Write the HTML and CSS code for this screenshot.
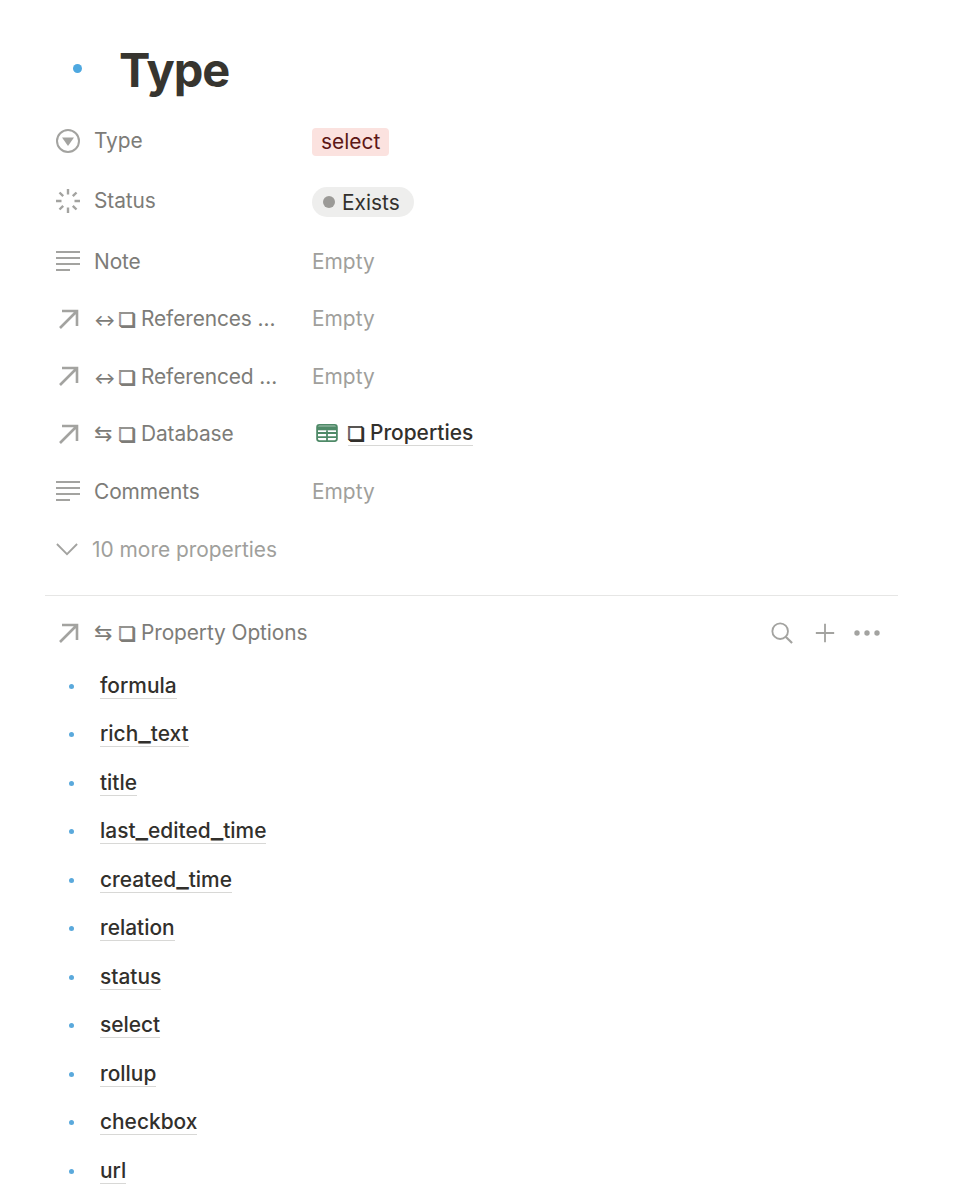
FILE: index.html
```html
<!DOCTYPE html>
<html lang="en">
<head>
    <meta charset="UTF-8">
    <meta name="viewport" content="width=device-width, initial-scale=1.0">
    <title>Type</title>
    <link rel="stylesheet" href="styles.css">
</head>
<body>

<svg class="defs" width="0" height="0">
    <symbol id="i-arrow" viewBox="0 0 24 24">
        <path d="M4 21 L21 4 M6 4 H21 V19" fill="none" stroke="currentColor" stroke-width="2.6"/>
    </symbol>
    <symbol id="i-lines" viewBox="0 0 24 24">
        <path d="M0 2 H24 M0 8 H24 M0 14 H24 M0 20 H14" fill="none" stroke="currentColor" stroke-width="2"/>
    </symbol>
    <symbol id="i-table" viewBox="0 0 24 20">
        <rect x="1" y="1" width="22" height="18" rx="2.5" fill="#fff" stroke="#4f8a68" stroke-width="2"/>
        <path d="M1 2.5 H23 V7 H1 Z" fill="#4f8a68"/>
        <path d="M1 10 H23 M1 14.5 H23 M12 7 V19" fill="none" stroke="#4f8a68" stroke-width="2"/>
    </symbol>
</svg>

<div class="page">
    <div class="header">
        <span class="page-dot"></span>
        <h1>Type</h1>
    </div>

    <div class="props">
        <div class="prop">
            <svg class="icon" viewBox="0 0 24 24">
                <circle cx="12" cy="12" r="11" fill="none" stroke="currentColor" stroke-width="2"/>
                <path d="M6 8.5 H18 L12 17 Z" fill="currentColor"/>
            </svg>
            <span class="prop-name raised">Type</span>
            <span class="tag">select</span>
        </div>
        <div class="prop">
            <svg class="icon spinner" viewBox="0 0 26 26">
                <path d="M13 1 V6.5 M13 19.5 V25 M1 13 H6.5 M19.5 13 H25 M4.5 4.5 L8.2 8.2 M17.8 17.8 L21.5 21.5 M21.5 4.5 L17.8 8.2 M8.2 17.8 L4.5 21.5" fill="none" stroke="currentColor" stroke-width="2.4"/>
            </svg>
            <span class="prop-name raised">Status</span>
            <span class="status"><span class="status-dot"></span>Exists</span>
        </div>
        <div class="prop note">
            <svg class="icon"><use href="#i-lines"/></svg>
            <span class="prop-name">Note</span>
            <span class="empty">Empty</span>
        </div>
        <div class="prop short">
            <svg class="icon"><use href="#i-arrow"/></svg>
            <span class="prop-name"><span class="rel">↔</span><span class="box">❏</span>References ...</span>
            <span class="empty">Empty</span>
        </div>
        <div class="prop short">
            <svg class="icon"><use href="#i-arrow"/></svg>
            <span class="prop-name"><span class="rel">↔</span><span class="box">❏</span>Referenced ...</span>
            <span class="empty">Empty</span>
        </div>
        <div class="prop short">
            <svg class="icon"><use href="#i-arrow"/></svg>
            <span class="prop-name"><span class="rel swap">⇆</span><span class="box">❏</span>Database</span>
            <span class="db-link">
                <svg class="table-icon"><use href="#i-table"/></svg>
                <span class="link"><span class="box">❏</span>Properties</span>
            </span>
        </div>
        <div class="prop short">
            <svg class="icon"><use href="#i-lines"/></svg>
            <span class="prop-name">Comments</span>
            <span class="empty">Empty</span>
        </div>
        <div class="prop short more">
            <svg class="icon chevron" viewBox="0 0 24 14">
                <path d="M1 1 L12 12 L23 1" fill="none" stroke="currentColor" stroke-width="2"/>
            </svg>
            <span>10 more properties</span>
        </div>
    </div>

    <div class="view-head">
        <div class="view-title">
            <svg class="icon"><use href="#i-arrow"/></svg>
            <span class="prop-name"><span class="rel swap">⇆</span><span class="box">❏</span>Property Options</span>
        </div>
        <div class="view-actions">
            <svg class="action" viewBox="0 0 24 24">
                <circle cx="10" cy="10" r="8.5" fill="none" stroke="currentColor" stroke-width="2"/>
                <path d="M16 16 L23 23" fill="none" stroke="currentColor" stroke-width="2.4"/>
            </svg>
            <svg class="action" viewBox="0 0 24 24">
                <path d="M12 2 V22 M2 12 H22" fill="none" stroke="currentColor" stroke-width="2"/>
            </svg>
            <svg class="action dots" viewBox="0 0 26 6">
                <circle cx="3" cy="3" r="2.7" fill="currentColor"/>
                <circle cx="13" cy="3" r="2.7" fill="currentColor"/>
                <circle cx="23" cy="3" r="2.7" fill="currentColor"/>
            </svg>
        </div>
    </div>

    <ul class="options">
        <li><span class="option-dot"></span><span class="link">formula</span></li>
        <li><span class="option-dot"></span><span class="link">rich<span class="us">_</span>text</span></li>
        <li><span class="option-dot"></span><span class="link">title</span></li>
        <li><span class="option-dot"></span><span class="link">last<span class="us">_</span>edited<span class="us">_</span>time</span></li>
        <li><span class="option-dot"></span><span class="link">created<span class="us">_</span>time</span></li>
        <li><span class="option-dot"></span><span class="link">relation</span></li>
        <li><span class="option-dot"></span><span class="link">status</span></li>
        <li><span class="option-dot"></span><span class="link">select</span></li>
        <li><span class="option-dot"></span><span class="link">rollup</span></li>
        <li><span class="option-dot"></span><span class="link">checkbox</span></li>
        <li><span class="option-dot"></span><span class="link">url</span></li>
    </ul>
</div>

</body>
</html>
```
FILE: styles.css
```css
html, body {
    margin: 0;
    height: 1200px;
    overflow: hidden;
    background-color: #fff;
}

body {
    font-family: 'Inter', 'DejaVu Sans', sans-serif;
    font-size: 20.9px;
    color: #37352f;
}

.defs {
    display: block;
    height: 0;
}

.page {
    padding: 39px 67px 0 45px;
}

.header {
    display: flex;
    align-items: center;
    height: 62px;
}

.page-dot {
    width: 9px;
    height: 9px;
    margin-left: 28px;
    margin-top: -4px;
    border-radius: 50%;
    background-color: #4ea8e0;
}

h1 {
    margin: 0 0 0 37px;
    font-size: 47px;
    font-weight: 700;
    letter-spacing: -1px;
    line-height: 62px;
    color: #37352f;
}

.props {
    padding-top: 10px;
    padding-left: 11px;
    padding-bottom: 17px;
    border-bottom: 1px solid #e6e6e5;
}

.prop {
    display: flex;
    align-items: center;
    height: 60px;
    color: #7d7c78;
}

.prop.note {
    box-sizing: border-box;
    height: 59px;
    padding-top: 2px;
}

.prop.short {
    height: 57.6px;
}

.icon {
    flex: none;
    width: 24px;
    height: 24px;
    margin-right: 14px;
    color: #a3a3a0;
}

.spinner {
    width: 26px;
    height: 26px;
    margin-left: -1px;
    margin-right: 13px;
}

.chevron {
    width: 22px;
    height: 13px;
    margin-right: 14px;
}

.prop-name {
    flex: none;
    width: 218px;
    letter-spacing: -0.1px;
    white-space: nowrap;
}

.raised {
    margin-top: -2px;
}

/* the relation arrow and page glyph sit smaller than the label text */
.rel {
    display: inline-block;
    width: 25px;
    font-size: 16px;
    font-weight: 600;
}

.rel.swap {
    font-size: 22px;
    font-weight: 400;
    line-height: 20px;
}

.box {
    display: inline-block;
    width: 23px;
    margin-left: -1px;
    font-size: 19.5px;
    line-height: 20px;
    text-shadow: 1px 1px 0 currentColor;
}

.tag {
    margin-top: 2px;
    padding: 2px 9px;
    border-radius: 4px;
    background-color: #fbe2df;
    color: #5d1715;
    line-height: 24px;
}

.status {
    display: flex;
    align-items: center;
    height: 30px;
    margin-top: 2px;
    padding: 0 14px 0 11px;
    border-radius: 15px;
    background-color: #eeeeed;
    color: #32302c;
}

.status-dot {
    width: 12px;
    height: 12px;
    margin-right: 7px;
    border-radius: 50%;
    background-color: #9b9a97;
}

.empty {
    color: #a09f9c;
}

.db-link {
    display: flex;
    align-items: center;
    margin-top: -1px;
    margin-left: 4px;
}

.table-icon {
    width: 22px;
    height: 18px;
    margin-right: 10px;
}

.link {
    font-weight: 500;
    color: #32302c;
    border-bottom: 1px solid #d8d8d6;
    line-height: 24px;
}

.us {
    font-size: 1.3em;
    line-height: 0;
}

.more {
    color: #a09f9c;
}

.view-head {
    display: flex;
    align-items: center;
    justify-content: space-between;
    box-sizing: border-box;
    height: 66px;
    padding: 8px 17px 0 11px;
}

.view-title {
    display: flex;
    align-items: center;
    color: #7d7c78;
}

.view-actions {
    display: flex;
    align-items: center;
    gap: 21px;
    color: #a3a3a0;
}

.action {
    width: 22px;
    height: 22px;
}

.action.dots {
    width: 26px;
    height: 6px;
    margin-left: -3px;
    margin-right: 1px;
}

.options {
    list-style: none;
    margin: 0;
    padding: 0 0 0 24px;
}

.options li {
    display: flex;
    align-items: center;
    height: 48.5px;
}

.option-dot {
    width: 5px;
    height: 5px;
    margin-right: 26px;
    border-radius: 50%;
    background-color: #5aa9dc;
}
```
